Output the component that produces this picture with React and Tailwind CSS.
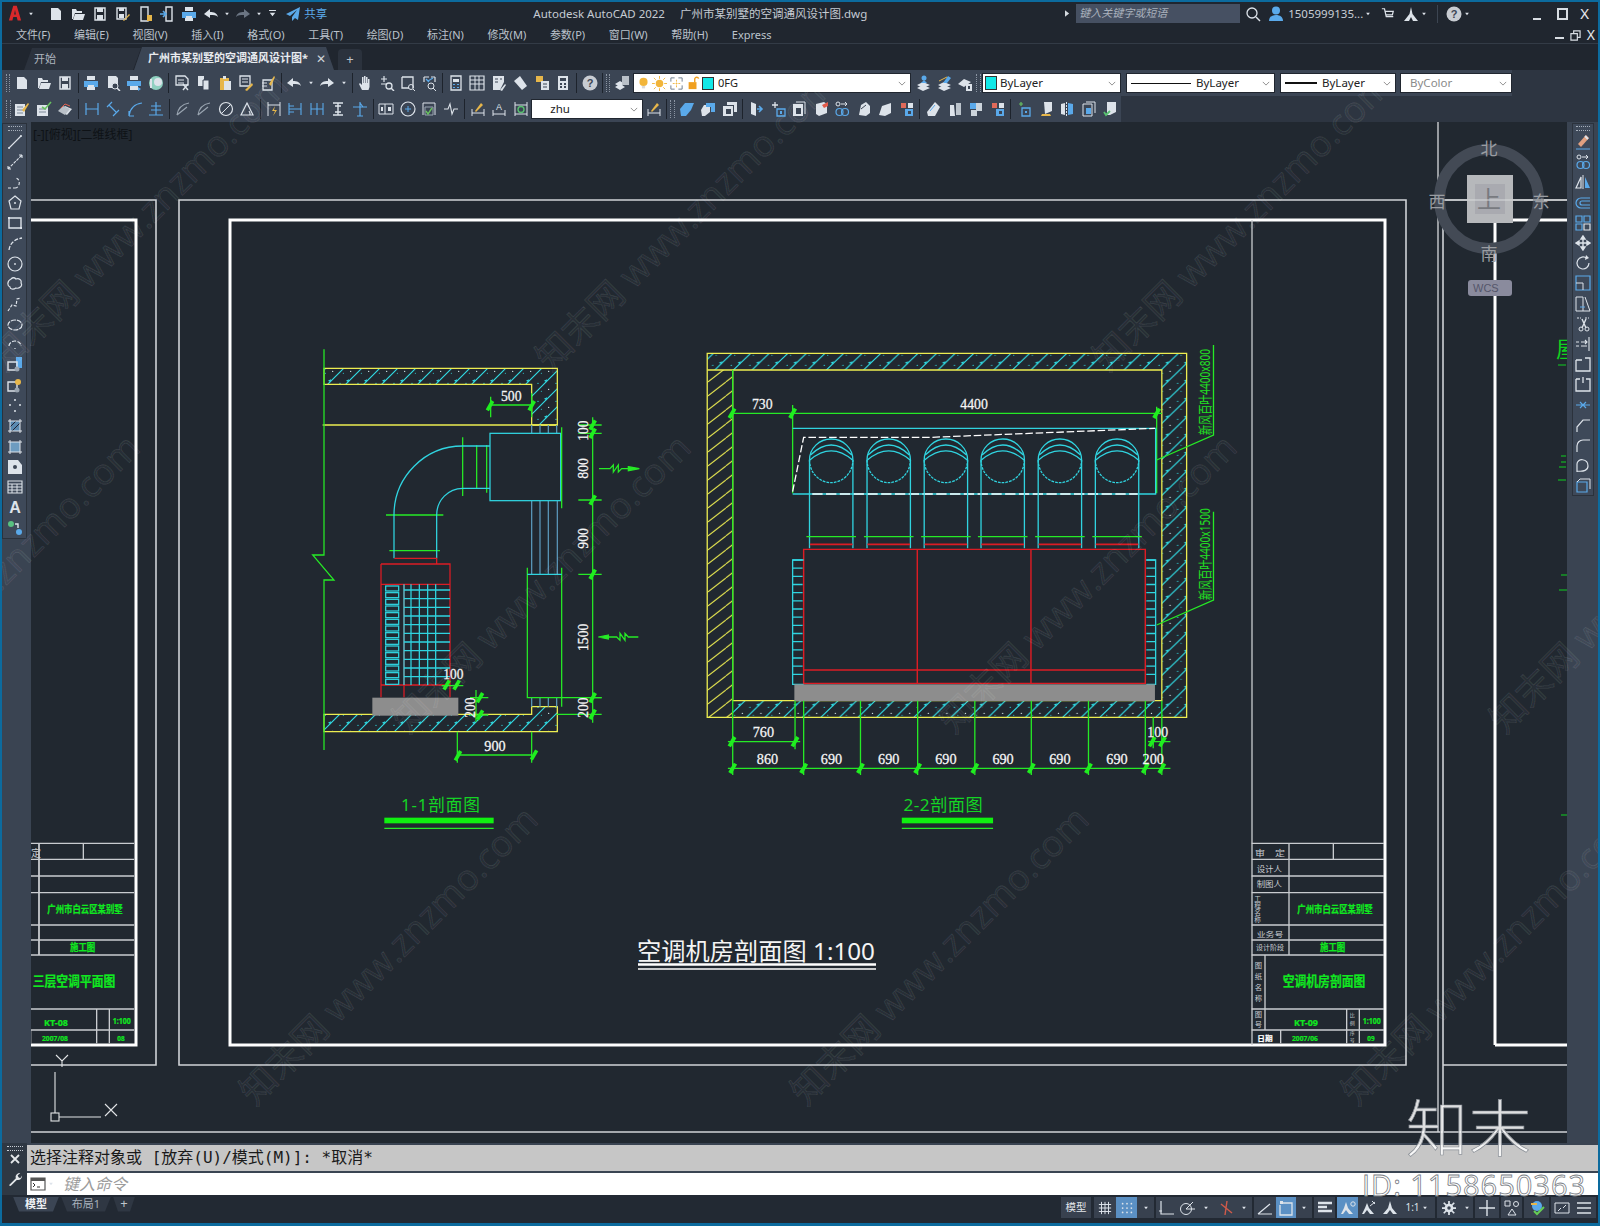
import React from "react";

const W = "#dde3ea", B = "#5aa9ea", Y = "#e6b64a", GY = "#9aa5b1";
const CJK = '"Noto Sans","Noto Sans CJK SC",sans-serif';

const G = {
  doc: <path d="M3 2h7l3 3v9H3z" fill={W} />,
  folder: <><path d="M2 3h4l1 2h5v2H5l-2 6H2z" fill={W} /><path d="M5 8h10l-2 6H3z" fill={W} /></>,
  save: <><path d="M3 2h10v12H3z" fill="none" stroke={W} strokeWidth="1.4" /><path d="M5 2h6v4H5zM5 9h6v5H5z" fill={W} /></>,
  saveas: <><path d="M2 2h9v11H2z" fill="none" stroke={W} strokeWidth="1.4" /><path d="M4 2h5v3H4zM4 8h5v4H4z" fill={W} /><path d="M8 15l6-7 1 1-6 6z" fill={Y} /></>,
  phone: <><path d="M4 1h7v14H4z" fill="none" stroke={W} strokeWidth="1.4" /><path d="M10 9h5v6h-5z" fill={Y} /></>,
  phone2: <><path d="M7 1h6v14H7z" fill="none" stroke={W} strokeWidth="1.4" /><path d="M1 8h5M4 5l3 3-3 3" stroke={B} strokeWidth="1.6" fill="none" /></>,
  print: <><path d="M4 1h8v4H4zM4 10h8v5H4z" fill={W} /><path d="M1 6h14v6H1z" fill={B} /><path d="M5 10h6v5H5z" fill={W} /></>,
  preview: <><path d="M3 1h8l2 2v10H3z" fill={W} /><circle cx="10" cy="11" r="3" fill="#3b4554" stroke={W} /><path d="M12 13l3 3" stroke={W} strokeWidth="1.5" /></>,
  publish: <><path d="M4 1h8v4H4zM4 10h8v5H4z" fill={W} /><path d="M1 6h14v5H1z" fill={B} /><path d="M12 12l3 2-3 2z" fill={B} /></>,
  globe: <><circle cx="8" cy="8" r="7" fill="#8fd0c0" /><circle cx="10" cy="7" r="4" fill={W} /><path d="M3 4v9" stroke={W} strokeWidth="2" /></>,
  undo: <path d="M1 8l6-5v3c4 0 7 1 8 5-2-2-4-2-8-2v3z" fill={W} />,
  redo: <path d="M15 8L9 3v3C5 6 2 7 1 11c2-2 4-2 8-2v3z" fill={W} />,
  redog: <path d="M15 8L9 3v3C5 6 2 7 1 11c2-2 4-2 8-2v3z" fill="#6b7583" />,
  caret: <path d="M5 6h6l-3 4z" fill={W} />,
  dd: <path d="M3 3h10v1.5H3zM4 7h8l-4 5z" fill={W} />,
  share: <path d="M15 1L1 8l4 2 7-6-5 7v4l3-3 3 2z" fill={B} />,
  cut: <><path d="M2 1h9l3 3v6H2z" fill="none" stroke={W} strokeWidth="1.3" /><path d="M4 5h6M4 8h6" stroke={W} /><path d="M9 9l5 6M14 9l-5 6" stroke={W} strokeWidth="1.4" /></>,
  copy: <><path d="M3 1h6v10H3z" fill={W} /><path d="M8 5h6v10H8z" fill={W} stroke="#3b4554" /></>,
  paste: <><path d="M3 3h9v12H3z" fill={Y} /><path d="M6 1h3v3H6z" fill={W} /><path d="M7 6h7v9H7z" fill={W} /></>,
  match: <><path d="M2 1h10v10H2z" fill="none" stroke={W} strokeWidth="1.3" /><path d="M4 4h6M4 7h6" stroke={W} /><path d="M7 15l7-7 1 2-6 6z" fill={Y} /></>,
  matchp: <><path d="M3 5h9v10H3z" fill="none" stroke={W} strokeWidth="1.3" /><path d="M9 9l5-8 1 1-4 9z" fill={Y} /><path d="M2 8h5M2 11h5" stroke={W} /></>,
  hand: <path d="M5 15l-3-6 1-1 2 2V2h1.5v6H7V1h1.5v7H9V2h1.5v6h.5V4h1.5v8l-1 3z" fill={W} />,
  zoomr: <><path d="M5 1v6M2 4h6M2 9h6" stroke={W} strokeWidth="1.2" /><circle cx="10" cy="11" r="3" fill="none" stroke={W} strokeWidth="1.3" /><path d="M12 13l3 3" stroke={W} strokeWidth="1.4" /></>,
  zoomw: <><path d="M2 2h11v11" fill="none" stroke={W} strokeWidth="1.3" /><path d="M2 2v11h7" fill="none" stroke={W} strokeWidth="1.3" /><circle cx="11" cy="12" r="2.5" fill="none" stroke={W} /><path d="M13 14l2 2" stroke={W} /></>,
  zoomp: <><path d="M2 2h5M9 2h4M2 2v5M13 2v5" stroke={W} strokeWidth="1.2" /><path d="M6 6l5-3M4 4l3 3" stroke={B} strokeWidth="1.3" /><circle cx="9" cy="11" r="3" fill="none" stroke={W} /><path d="M11 13l3 3" stroke={W} /></>,
  prop: <><path d="M3 1h10v14H3z" fill="none" stroke={W} strokeWidth="1.3" /><path d="M5 4h6v3H5z" fill={W} /><path d="M5 9h2v1H5zM9 9h2v1H9zM5 12h2v1H5zM9 12h2v1H9z" fill={B} /></>,
  dc: <><path d="M1 1h14v14H1z" fill="none" stroke={W} strokeWidth="1.2" /><path d="M6 1v14M10 1v14M1 5h14M1 9h14" stroke={W} /></>,
  tool: <><path d="M2 1h11v6l-4 8H2z" fill={W} /><path d="M4 4h3M4 7h3M9 4h2" stroke="#3b4554" /><path d="M9 15l5-6 1 1-4 6z" fill={W} /></>,
  sheet: <path d="M2 6l6-5 7 10-5 4z" fill={W} />,
  mark: <><path d="M2 1h7v6H2z" fill={Y} /><path d="M7 6h8v9H7z" fill={W} /><path d="M9 9h4M9 12h4" stroke="#3b4554" /></>,
  calc: <><path d="M3 1h10v14H3z" fill={W} /><path d="M5 3h6v3H5z" fill="#3b4554" /><path d="M5 8h2v2H5zM9 8h2v2H9zM5 11h2v2H5zM9 11h2v2H9z" fill="#3b4554" /></>,
  help: <><circle cx="8" cy="8" r="7.5" fill="#c8ccd2" /><text x="8" y="12" fontSize="11" fontWeight="700" textAnchor="middle" fill="#3b4554" fontFamily="Liberation Sans">?</text></>,
  sq: <path d="M2 2h12v12H2z" fill="none" stroke={W} strokeWidth="1.3" />,
  layer: <><path d="M1 9l5-3 5 3-5 3zM1 12l5-3 5 3-5 3z" fill={W} /><path d="M8 1h7v9H8z" fill="#b9c0c8" /></>,
  layer2: <><path d="M1 10l6-3 7 3-7 3zM1 13l6-3 7 3-7 3z" fill={W} /><circle cx="8" cy="3" r="2.5" fill={B} /><path d="M5 8l3-3 3 3z" fill={B} /></>,
  layer3: <><path d="M1 10l6-3 7 3-7 3zM1 13l6-3 7 3-7 3z" fill={W} /><path d="M11 1l-5 7h4l4-5z" fill={B} /><path d="M2 6l8-4" stroke={Y} /></>,
  layer4: <><path d="M1 9l6-5 7 3-7 5z" fill={W} /><path d="M9 9h6v7H9z" fill={W} /><path d="M11 11h2v3h-2z" fill="#3b4554" /></>,
  bulb: <><circle cx="8" cy="6" r="5" fill="#f2b53a" /><path d="M6 11h4v3H6z" fill="#d9d9d9" /></>,
  sun: <><circle cx="8" cy="8" r="4" fill="#f2b53a" /><path d="M8 0v3M8 13v3M0 8h3M13 8h3M2 2l2 2M12 12l2 2M14 2l-2 2M4 12l-2 2" stroke="#f2b53a" /></>,
  frozen: <><path d="M2 2h4M2 2v4M10 2h4M14 2v4M2 10v4h4M14 10v4h-4" stroke="#6b7a8a" fill="none" /><path d="M8 4v9M4 8h8" stroke="#f0b840" strokeDasharray="2 1" /></>,
  lock: <><path d="M3 7h9v8H3z" fill="#f0a020" /><path d="M10 7V3a2.4 2.4 0 014.5 0" stroke="#f0a020" strokeWidth="1.6" fill="none" /></>,
  note: <><path d="M1 3h10v12H1z" fill={W} /><path d="M3 6h6M3 9h6M3 12h6" stroke="#7a8796" /><path d="M8 9l6-7 1 1-5 8z" fill={Y} /></>,
  noted: <><path d="M1 4h11v11H1z" fill={W} /><path d="M3 8h7M3 11h7" stroke="#7a8796" /><path d="M6 6l3 2 6-7" stroke="#68c060" strokeWidth="1.6" fill="none" /></>,
  noter: <><path d="M3 10l5-5 7 3-5 6z" fill={W} /><path d="M1 10l5-5 7 3-5 6z" fill="#b9c0c8" /><path d="M4 7l4-4 5 2" fill="none" stroke="#e06050" /></>,
  dimh: <path d="M2 2v12M14 2v12M2 8h12" stroke={B} strokeWidth="1.2" fill="none" />,
  dima: <path d="M2 6l5-5M8 15l6-6M4 4l7 7" stroke={B} strokeWidth="1.2" fill="none" />,
  arcd: <path d="M2 15C3 7 7 3 15 2M2 10v5M2 15h5" stroke={B} strokeWidth="1.2" fill="none" />,
  ord: <path d="M1 14h14M8 1v13M3 5h10M3 9h10" stroke={B} strokeWidth="1.2" fill="none" />,
  rad: <path d="M2 14C3 7 8 3 14 2M2 14L12 6" stroke={GY} strokeWidth="1.2" fill="none" />,
  circ: <><circle cx="8" cy="8" r="6.5" fill="none" stroke={W} strokeWidth="1.2" /><path d="M3 13L13 3" stroke={W} /></>,
  ang: <path d="M2 14h12L8 2zM11 14a5 5 0 00-1-4" stroke={W} strokeWidth="1.2" fill="none" />,
  qd: <><path d="M2 1v14M14 1v14M2 4h12" stroke={W} fill="none" /><path d="M9 5l-3 5h3l-2 5 4-6H8z" fill={Y} /></>,
  base: <path d="M2 2v12M14 2v12M2 8h12M2 5h5M2 11h5" stroke={B} strokeWidth="1.1" fill="none" />,
  cont: <path d="M2 2v12M8 2v12M14 2v12M2 8h12" stroke={B} strokeWidth="1.1" fill="none" />,
  sp: <path d="M3 2h10M3 14h10M8 2v12M5 5h6M5 11h6" stroke={W} strokeWidth="1.4" fill="none" />,
  brk: <path d="M8 1v14M1 6h14M5 15h6M8 2l3 4" stroke={B} strokeWidth="1.2" fill="none" />,
  tol: <><path d="M1 3h14v10H1z" fill="none" stroke={W} /><path d="M7 3v10" stroke={W} /><path d="M3 6h2v4H3zM10 6h3v4h-3z" fill={W} /></>,
  center: <><circle cx="8" cy="8" r="7" fill="none" stroke={W} strokeWidth="1.2" /><path d="M8 5v6M5 8h6" stroke={B} /></>,
  insp: <><path d="M2 2h12M2 2v12M14 2v12" stroke={W} fill="none" /><path d="M4 6h8v8H4z" fill="none" stroke={GY} /><path d="M5 10l2 3 4-6" stroke="#68c060" fill="none" strokeWidth="1.4" /></>,
  jog: <path d="M1 8h4l2-5 2 10 2-5h4" stroke={W} strokeWidth="1.1" fill="none" />,
  dimed: <><path d="M2 8v7M14 8v7M2 12h12" stroke={W} fill="none" /><path d="M5 10l6-8 2 2-7 7z" fill={Y} /></>,
  dimt: <><path d="M2 9v6M14 9v6M2 13h12" stroke={W} fill="none" /><text x="8" y="9" fontSize="9" textAnchor="middle" fill={W} fontFamily="Liberation Sans">A</text></>,
  dimu: <><path d="M2 1v14M14 1v14M2 4h12M2 13h12" stroke={W} fill="none" /><circle cx="8" cy="8.5" r="3" fill="none" stroke="#58c070" strokeWidth="1.4" /></>,
  s1: <path d="M1 8l5-6h9l-3 7-5 6H2z" fill={B} />,
  s2: <><path d="M1 9l3-5h6v7l-5 4H2z" fill={W} /><path d="M6 2h9v9h-4V6H6z" fill={B} /></>,
  s3: <><path d="M5 1h10v10h-3V4H5z" fill={W} /><path d="M1 5h10v10H1z" fill={W} /><path d="M4 8h5v5H4z" fill="#3b4554" /></>,
  s4: <><path d="M3 1l5 2v12l-5-2z" fill={W} /><path d="M9 8h4M11 5l3 3-3 3" stroke={B} strokeWidth="1.6" fill="none" /></>,
  s5: <><path d="M5 1v6M2 4h6" stroke={W} strokeWidth="1.3" /><path d="M7 8h8v7H7z" fill="none" stroke={B} strokeWidth="1.3" /><path d="M10 10h2v3h-2z" fill={B} /></>,
  s6: <><path d="M2 3h10v12H2z" fill={W} /><path d="M5 1h9v12" stroke={W} fill="none" /><path d="M5 7h5v6H5z" fill="#3b4554" /></>,
  s7: <><path d="M3 3l8-2 3 2v9l-8 3-3-2z" fill={W} /><path d="M9 4l6-3v4l-4 2z" fill="#e05a4a" /></>,
  s8: <><path d="M2 2a6 6 0 016 6v1H2z" fill="none" stroke={W} /><path d="M8 8h6v6H8z" fill={B} /><path d="M3 3l3 2" stroke={W} /></>,
  s9: <><path d="M2 14l3-9 9-3v10l-6 3z" fill={W} /></>,
  s10: <><path d="M2 2h6v6H2z" fill={B} /><path d="M8 2h6v8H9v5H3V9h5z" fill={W} opacity=".9" /></>,
  s11: <><path d="M2 2h5v5H2z" fill="#e06a5a" /><path d="M9 2h5v5H9z" fill={W} /><path d="M6 8h8v7H6z" fill={B} /><path d="M9 10h3v3H9z" fill="#3b4554" /></>,
  s12: <><path d="M3 14l2-10 5-3 4 4v7l-4 3z" fill={W} /><path d="M5 8l5-4" stroke="#3b4554" /></>,
  s13: <><path d="M2 11l8-10 5 5-5 9H3z" fill={W} /><path d="M5 10l5-6" stroke={B} /></>,
  s14: <><path d="M3 4h4l1 11H3z" fill={W} /><path d="M9 2h5v12H9z" fill={W} opacity=".8" /></>,
  s15: <><path d="M5 1v4M3 3h4" stroke="#68c060" strokeWidth="1.2" /><path d="M6 7h8v8H6z" fill="none" stroke={B} strokeWidth="1.3" /><path d="M9 10h2v2H9z" fill={B} /></>,
  s16: <><path d="M6 1h8v9l-7 3z" fill={W} /><path d="M4 13h8l1 2H3z" fill={Y} /></>,
  s17: <><path d="M2 3l4-1v12l-4-1z" fill={W} /><path d="M9 2l5 1v10l-5 1z" fill={B} /><path d="M7.5 1v14" stroke={W} strokeDasharray="2 1" /></>,
  s18: <><path d="M2 3h9v12H2z" fill="none" stroke={W} /><path d="M5 1h9v11" fill="none" stroke={W} /><path d="M5 7h5v6H5z" fill={B} /></>,
  s19: <><path d="M5 1h9v10l-6 3H5z" fill={W} /><path d="M2 11l2 3 4-4" stroke="#58c070" strokeWidth="1.8" fill="none" /></>,
  line: <><path d="M2 14L14 2" stroke={W} strokeWidth="1.1" /><circle cx="2" cy="14" r="1" fill={W} /><circle cx="14" cy="2" r="1" fill={W} /></>,
  xline: <path d="M1 15L15 1M15 1h-4M15 1v4M1 15h4M1 15v-4" stroke={W} strokeWidth="1.1" fill="none" strokeDasharray="3 1" />,
  pline: <path d="M1 13h7M8 13c5 0 6-9 1-10" stroke={W} strokeWidth="1.1" fill="none" strokeDasharray="3 2" />,
  poly: <><path d="M8 1l6 5-2 8H4L2 6z" fill="none" stroke={W} strokeWidth="1.2" /><circle cx="8" cy="8" r="1" fill={W} /></>,
  rect: <><path d="M2 3h12v10H2z" fill="none" stroke={W} strokeWidth="1.4" /><path d="M1 2h2v2H1zM13 12h2v2h-2z" fill={W} /></>,
  arc: <path d="M2 14C3 7 8 3 15 2" stroke={W} strokeWidth="1.3" fill="none" strokeDasharray="4 1.5" />,
  circle: <><circle cx="8" cy="8" r="7" fill="none" stroke={W} strokeWidth="1.2" /><circle cx="8" cy="8" r=".9" fill={W} /></>,
  cloud: <path d="M4 3c2-2 4-1 5 0 3-1 6 1 5 4 2 3-2 6-5 5-3 2-6 1-6-1C0 10 0 5 4 3z" fill="none" stroke={W} strokeWidth="1.2" />,
  spline: <path d="M1 14l4-6 4 1 1-7 4-1" stroke={W} strokeWidth="1.2" fill="none" strokeDasharray="3 1.5" />,
  ell: <><ellipse cx="8" cy="8" rx="7" ry="5" fill="none" stroke={W} strokeWidth="1.2" strokeDasharray="5 1" /></>,
  ella: <path d="M2 9a6 5 0 1112 0M8 11v1" stroke={W} strokeWidth="1.2" fill="none" strokeDasharray="4 1.5" />,
  blk: <><path d="M9 0h6v11H9z" fill={B} /><path d="M1 5h9v8H1z" fill="none" stroke={W} strokeWidth="1.4" /><circle cx="10" cy="12" r="2.5" fill={GY} /></>,
  blk2: <><path d="M1 4h9v9H1z" fill="none" stroke={W} strokeWidth="1.4" /><circle cx="11" cy="4" r="3" fill={Y} /><circle cx="10" cy="12" r="2.5" fill={GY} /></>,
  pts: <path d="M8 2v.1M3 7v.1M13 7v.1M8 13v.1" stroke={W} strokeWidth="2" strokeLinecap="round" />,
  hatch: <><path d="M3 3h10v10H3z" fill="#5a8ab0" /><path d="M3 9l6-6M5 13l8-8" stroke="#223" /><path d="M3 1v14M13 1v14M1 3h14M1 13h14" stroke={W} /></>,
  grad: <><path d="M3 3h10v10H3z" fill="#6d9cc0" /><path d="M3 1v14M13 1v14M1 3h14M1 13h14" stroke={W} /></>,
  region: <><path d="M1 1h10l4 5v9H1z" fill={W} /><circle cx="8" cy="8" r="2" fill="#3b4554" /></>,
  table: <><path d="M1 2h14v12H1z" fill="none" stroke={W} strokeWidth="1.1" /><path d="M1 5h14M1 8h14M1 11h14M5 5v9M10 5v9" stroke={W} /></>,
  mtext: <text x="8" y="14" fontSize="16" fontWeight="700" textAnchor="middle" fill={W} fontFamily="Liberation Sans">A</text>,
  add: <><circle cx="4" cy="4" r="3" fill="#58c080" /><circle cx="12" cy="12" r="3" fill={B} /><path d="M8 4h3v4" stroke={W} strokeWidth="1.4" fill="none" /></>,
  erase: <><path d="M3 10L11 1l3 3-8 9z" fill="#e0a080" /><path d="M10 2l3 3" stroke={W} strokeWidth="2" /><path d="M1 15h14" stroke={B} /></>,
  cpy: <><circle cx="4" cy="3" r="2" fill="none" stroke={W} /><path d="M7 3h6M11 1l2 2-2 2" stroke={W} fill="none" /><circle cx="5.5" cy="11" r="3.5" fill="none" stroke={B} strokeWidth="1.2" /><circle cx="11" cy="11" r="3.5" fill="none" stroke={B} strokeWidth="1.2" /></>,
  mirror: <><path d="M8 1v14" stroke={W} /><path d="M6 3L1 14h5z" fill="none" stroke={W} strokeWidth="1.2" /><path d="M10 3l5 11h-5z" fill={B} /></>,
  offset: <path d="M15 3H6a5 5 0 000 10h9M15 6H7a2 2 0 000 4h8" stroke={B} strokeWidth="1.2" fill="none" />,
  array: <><path d="M1 1h6v6H1zM9 1h6v6H9zM1 9h6v6H1z" fill="none" stroke={B} strokeWidth="1.2" /><path d="M9 9h6v6H9z" fill="none" stroke={W} strokeWidth="1.2" /></>,
  move: <path d="M8 1v14M1 8h14M8 1L6 4h4zM8 15l-2-3h4zM1 8l3-2v4zM15 8l-3-2v4z" stroke={W} strokeWidth="1.4" fill={W} />,
  rotate: <><path d="M12 3.5A6 6 0 1014 8" stroke={W} strokeWidth="1.2" fill="none" /><path d="M11 0l3 3-4 2z" fill={W} /></>,
  scale: <><path d="M1 1h14v14H1z" fill="none" stroke={B} strokeWidth="1.2" /><path d="M1 8h7v7" stroke={W} fill="none" /></>,
  stretch: <><path d="M1 1h7v14H1z" fill="none" stroke={W} /><path d="M10 1l5 14H8" stroke={W} fill="none" /><path d="M5 11h5" stroke={B} /></>,
  trim: <><path d="M2 2h4M10 2h4" stroke={W} strokeDasharray="2 1" /><path d="M7 3l4 9M11 3l-4 9" stroke={W} strokeWidth="1.4" /><circle cx="6" cy="13" r="2" fill="none" stroke={W} /><circle cx="12" cy="13" r="2" fill="none" stroke={W} /></>,
  extend: <path d="M14 1v14M1 6h3M6 6h6M1 10h3M6 10h6M10 4l2 2-2 2" stroke={W} strokeWidth="1.1" fill="none" />,
  brk1: <path d="M1 4v11h14V2H10M1 4h6" stroke={W} strokeWidth="1.3" fill="none" />,
  brk2: <path d="M1 3v12h14V3H11M5 3H1M8 1v6" stroke={W} strokeWidth="1.3" fill="none" />,
  join: <path d="M1 8h14M5 5l3 3-3 3M11 5L8 8l3 3" stroke={B} strokeWidth="1.2" fill="none" />,
  chamfer: <path d="M2 15v-5l6-7h7" stroke={W} strokeWidth="1.2" fill="none" />,
  fillet: <path d="M2 15V9a6 6 0 016-6h7" stroke={W} strokeWidth="1.2" fill="none" />,
  blend: <path d="M2 15V7c0-6 11-6 11 2 0 4-4 6-11 5" stroke={W} strokeWidth="1.2" fill="none" />,
  explode: <><path d="M2 5h10v10H2z" fill="none" stroke={B} strokeWidth="1.2" /><path d="M5 2h10v10" fill="none" stroke={W} /><path d="M2 5l3-3" stroke={W} /></>,
  grid: <path d="M4 1v14M8 1v14M12 1v14M1 4h14M1 8h14M1 12h14" stroke={W} strokeWidth="1.1" />,
  snap: <path d="M3 3v.1M8 3v.1M13 3v.1M3 8v.1M8 8v.1M13 8v.1M3 13v.1M8 13v.1M13 13v.1" stroke={W} strokeWidth="2" strokeLinecap="round" />,
  ortho: <path d="M3 1v13h13M1 11h3" stroke={W} strokeWidth="1.2" fill="none" />,
  polar: <><circle cx="7" cy="9" r="5.5" fill="none" stroke={W} /><path d="M7 9h9M7 9l7-7" stroke={W} /></>,
  osnap: <path d="M9 1l-2 14M3 4l11 9" stroke="#d05a4a" strokeWidth="1.4" fill="none" />,
  angle: <path d="M1 14h14M1 14L13 4" stroke={W} strokeWidth="1.2" fill="none" />,
  lwb: <><path d="M2 1h3v3H2z" fill={W} /><path d="M4 3h10v12H2V5" stroke={W} strokeWidth="1.3" fill="none" /></>,
  lw: <path d="M1 3h14M1 7h9M1 11h14" stroke={W} strokeWidth="2.4" />,
  annot: <><path d="M6 2l2 6 5 6H9L6 10l-3 4H1l3-6z" fill={W} /><circle cx="13" cy="4" r="2.2" fill="none" stroke={W} /></>,
  annot2: <><path d="M6 3l2 5 5 6H9L6 10l-3 4H1l3-6z" fill={W} /><path d="M9 6l5-4M11 1l3 3" stroke={W} /></>,
  annot3: <path d="M8 1l2 7 5 6h-4L8 10l-3 4H1l5-6z" fill={W} />,
  gear: <><circle cx="8" cy="8" r="5" fill={W} /><circle cx="8" cy="8" r="2" fill="#38414f" /><path d="M8 0v16M0 8h16M2 2l12 12M14 2L2 14" stroke={W} strokeWidth="2" /><circle cx="8" cy="8" r="2" fill="#38414f" /></>,
  plus: <path d="M8 0v16M0 8h16" stroke={W} strokeWidth="1.4" />,
  iso: <><path d="M1 1h5v5H1z" fill="none" stroke={W} /><circle cx="12" cy="4" r="2.5" fill="none" stroke={W} /><path d="M8 9l4 6H4z" fill="none" stroke={W} /></>,
  clean: <><circle cx="8" cy="6" r="5" fill={B} /><path d="M2 4h6" stroke={Y} strokeWidth="2" /><path d="M5 11l3 3 7-7" stroke="#66cc55" strokeWidth="2" fill="none" /></>,
  full: <><path d="M1 3h14v10H1z" fill="none" stroke={W} /><path d="M4 11l3-3M12 5l-3 3" stroke={W} /></>,
  burger: <path d="M1 3h14M1 8h14M1 13h14" stroke={W} strokeWidth="1.6" />,
  search: <><circle cx="7" cy="7" r="5" fill="none" stroke={W} strokeWidth="1.3" /><path d="M11 11l4 4" stroke={W} strokeWidth="1.5" /></>,
  user: <><circle cx="8" cy="4.5" r="4" fill={B} /><path d="M1 15c0-4 3-6 7-6s7 2 7 6z" fill={B} /></>,
  cart: <path d="M1 2h3l2 9h8M5 5h9l-1 4H6M6 13v.1M12 13v.1" stroke={W} strokeWidth="1.4" fill="none" />,
  adesk: <path d="M8 1l1.5 7 5.5 7h-5L8 11l-2 4H1l5.5-7z" fill={W} />,
  termi: <><path d="M1 2h14v12H1z" fill="none" stroke="#555" strokeWidth="1.2" /><path d="M1 2h14v3H1z" fill="#555" /><path d="M3 7l2 2-2 2M7 11h3" stroke="#333" fill="none" /></>,
};

function Ic({ n, cls = "w-4 h-4" }) {
  return <svg viewBox="0 0 16 16" className={cls}>{G[n]}</svg>;
}

function Row({ items }) {
  return items.map((n, i) => {
    if (n === "|") return <div key={i} className="w-[6px] h-full flex items-center justify-center"><div className="w-px h-[20px] bg-[#1d232c]" /></div>;
    if (n === "h") return <div key={i} className="w-[5px] h-[18px] mx-[1px] border-x border-dotted border-[#8b95a3]" />;
    if (n === "v") return <div key={i} className="w-[15px] flex justify-center"><Ic n="caret" cls="w-[10px] h-[10px]" /></div>;
    return <div key={i} className="w-[21.5px] flex items-center justify-center shrink-0"><Ic n={n} /></div>;
  });
}

function Combo({ cls, children, muted }) {
  return (
    <div className={`${cls} h-[20px] bg-white flex items-center relative shrink-0 border border-[#20262f] ${muted ? "text-[#8a8a8a]" : "text-[#222]"}`}>
      {children}
      <svg viewBox="0 0 10 6" className="absolute right-[4px] top-[7px] w-[8px] h-[5px]"><path d="M1 1l4 4 4-4" fill="none" stroke="#777" /></svg>
    </div>
  );
}

const Y1 = "#eded50", GR = "#26ea26", CY = "#30d4e0", RD = "#dc1c24", WT = "#f6f6f6";

function Tick({ x, y }) {
  return <path d={`M${x - 8} ${y + 14}L${x + 8} ${y - 14}`} stroke="#1fee1f" strokeWidth="11" />;
}
function Num({ x, y, w, t, r, size = 46, fill = WT }) {
  return (
    <text x={x} y={y} fontSize={size} fill={fill} stroke={fill} strokeWidth=".8" textAnchor="middle" textLength={w} lengthAdjust="spacingAndGlyphs" fontFamily="Liberation Serif" transform={r ? `rotate(-90 ${x} ${y})` : undefined}>{t}</text>
  );
}

function Section1() {
  const slats = [];
  for (let y = 738; y < 1030; y += 20) slats.push(<rect key={y} x="257" y={y} width="39" height="15" />);
  const gh = [];
  for (let y = 750; y < 1035; y += 26) gh.push(<path key={y} d={`M312 ${y}H450`} />);
  return (
    <g transform="translate(300 340) scale(.33333)" fill="none" strokeWidth="3.8">
      <path d="M72 85H772V255H695V133H72Z" fill="url(#hc)" stroke={Y1} />
      <path d="M68 255H772" stroke={Y1} />
      <path d="M72 1123H695V1100H772V1175H72Z" fill="url(#hc)" stroke={Y1} />
      <path d="M72 28V645H38L102 720H72V1230" stroke={GR} />
      <path d="M570 195H695M572 170V232M695 160V232" stroke={GR} />
      <Tick x={570} y={197} /><Tick x={695} y={197} />
      <Num x={634} y={184} w={62} t="500" />
      <path d="M695 255V280M720 255V280M745 255V280M770 255V280M695 482V703M720 482V703M745 482V703M772 482V703M695 1073V1100M720 1073V1100M745 1073V1100M770 1073V1100" stroke="#5b97ba" />
      <rect x="570" y="280" width="212" height="202" stroke={CY} />
      <path d="M785 262V505M682 683V1073H905M785 683V1100M770 1123H905M488 292V468M530 316V445M560 315V458M258 525H430M268 632H420" stroke={GR} />
      <path d="M682 703H785M488 318H570M488 445H570M488 318A206 207 0 0 0 282 525V655M488 445A78 80 0 0 0 410 525V655" stroke={CY} />
      <path d="M283 655H410V672M243 672H450V1072M243 672V1072M243 733H450M243 1035H450M312 733V1072" stroke={RD} />
      <g stroke={CY}>{slats}{gh}<path d="M333 733V1035M358 733V1035M383 733V1035M407 733V1035M312 733V1035" /></g>
      <rect x="217" y="1073" width="258" height="54" fill="#8d8d8d" />
      <path d="M425 1037H490M528 1050V1145M510 1073H565M510 1125H565M472 1175V1268M695 1175V1268M472 1245H695" stroke={GR} />
      <Tick x={440} y={1035} /><Tick x={470} y={1035} /><Tick x={540} y={1073} /><Tick x={540} y={1125} /><Tick x={474} y={1247} /><Tick x={702} y={1245} />
      <Num x={460} y={1018} w={60} t="100" />
      <Num x={524} y={1103} w={60} t="200" r />
      <Num x={585} y={1232} w={64} t="900" />
      <path d="M878 232V1148M835 255H905M835 280H905M835 480H905M835 703H905M835 1073H905" stroke={GR} />
      {[255, 280, 480, 703, 1073, 1123].map((y) => <Tick key={y} x={878} y={y} />)}
      <Num x={864} y={272} w={60} t="100" r />
      <Num x={864} y={385} w={62} t="800" r />
      <Num x={864} y={595} w={62} t="900" r />
      <Num x={864} y={892} w={82} t="1500" r />
      <Num x={864} y={1103} w={60} t="200" r />
      <path d="M897 386H930L940 375V396L955 375V396L965 386H985" stroke={GR} />
      <path d="M985 380L1018 386L985 392Z" fill={GR} stroke={GR} />
      <path d="M1015 891H985L975 880V901L960 880V901L950 891H925" stroke={GR} />
      <path d="M925 885L895 891L925 897Z" fill={GR} stroke={GR} />
      <text x="303" y="1413" fontSize="50" fill="#14d424" textLength="237" fontFamily={CJK}>1-1剖面图</text>
      <rect x="253" y="1433" width="328" height="17" fill="#10f010" />
      <path d="M253 1465H581" stroke={GR} />
    </g>
  );
}

function Section2() {
  const fans = [410, 577, 743, 908, 1074, 1240];
  const rungs = [];
  for (let y = 660; y <= 1012; y += 24.5) rungs.push(y);
  const xs = [124, 330, 495, 661, 827, 991, 1157, 1322, 1370];
  return (
    <g transform="translate(690 340) scale(.3444 .33333)" fill="none" strokeWidth="3.8">
      <path d="M50 40H1442V1132H50ZM124 90V1082H1370V90Z" fill="url(#hc)" fillRule="evenodd" />
      <rect x="50" y="90" width="74" height="1042" fill="#212830" />
      <rect x="50" y="90" width="74" height="1042" fill="url(#hy)" />
      <path d="M50 40H1442V1132H50Z" stroke={Y1} />
      <path d="M124 90H1370V1082H124ZM50 90H124" stroke={Y1} />
      <path d="M124 220H1370M124 90V1082M298 195V460M1355 200V460" stroke={GR} />
      <Tick x={122} y={220} /><Tick x={298} y={220} /><Tick x={1355} y={220} />
      <Num x={210} y={208} w={60} t="730" />
      <Num x={825} y={208} w={80} t="4400" />
      <path d="M298 265H1352V462H298" stroke={CY} />
      <path d="M298 455L330 292H700L1350 265" stroke="#fff" strokeDasharray="22 8" />
      <path d="M355 462H1300" stroke="#fff" strokeDasharray="30 10" />
      {fans.map((c) => (
        <g key={c}>
          <path d={`M${c - 63} 625V360A63 63 0 0 1 ${c + 63} 360V625`} stroke={CY} />
          <path d={`M${c - 60} 345Q${c} 285 ${c + 60} 345M${c - 62} 360Q${c} 305 ${c + 62} 360`} stroke={CY} />
          <path d={`M${c - 63} 360A63 68 0 0 0 ${c + 63} 360`} stroke={CY} strokeDasharray="8 3" />
          <path d={`M${c - 72} 590H${c + 72}`} stroke={GR} />
          <path d={`M${c - 62} 613H${c + 62}`} stroke={RD} strokeWidth="5" />
        </g>
      ))}
      <path d="M330 628H1322V1030H330ZM660 628V1030M990 628V1030M330 990H1322" stroke={RD} strokeWidth="4.2" />
      <path d="M330 660H298V1033H330M1325 660H1352V1033H1325" stroke={CY} />
      {rungs.map((y) => <path key={y} d={`M298 ${y}H327M1325 ${y}H1352`} stroke={CY} />)}
      <rect x="303" y="1033" width="1047" height="50" fill="#8d8d8d" />
      {xs.map((x) => <path key={x} d={`M${x} 1082V1305`} stroke={GR} />)}
      <path d="M110 1285H1395M110 1205H320M305 1082V1228M1330 1205H1395M1345 1132V1225" stroke={GR} />
      {xs.map((x) => <Tick key={x} x={x} y={1285} />)}
      <Tick x={122} y={1205} /><Tick x={305} y={1205} /><Tick x={1342} y={1205} /><Tick x={1372} y={1205} />
      <Num x={213} y={1192} w={62} t="760" />
      <Num x={225} y={1272} w={62} t="860" />
      {[411, 577, 743, 909, 1074, 1240].map((x) => <Num key={x} x={x} y={1272} w={62} t="690" />)}
      <Num x={1345} y={1272} w={62} t="200" />
      <Num x={1358} y={1192} w={60} t="100" />
      <path d="M1355 360L1520 285V15M1355 855L1520 780V515" stroke={GR} />
      <text transform="translate(1510 285) rotate(-90)" fontSize="40" fill="#22e022" textLength="258" lengthAdjust="spacingAndGlyphs" fontFamily={CJK}>新风百叶4400x800</text>
      <text transform="translate(1510 780) rotate(-90)" fontSize="40" fill="#22e022" textLength="275" lengthAdjust="spacingAndGlyphs" fontFamily={CJK}>新风百叶4400x1500</text>
      <text x="620" y="1413" fontSize="50" fill="#14d424" textLength="230" fontFamily={CJK}>2-2剖面图</text>
      <rect x="615" y="1433" width="265" height="17" fill="#10f010" />
      <path d="M615 1465H880" stroke={GR} />
    </g>
  );
}

function Tx({ x, y, s = 24, t, fill = "#c8ccd0", w, bold }) {
  return <text x={x} y={y} fontSize={s} fill={fill} textAnchor="middle" fontFamily={CJK} fontWeight={bold ? 700 : 400} stroke={bold ? fill : "none"} strokeWidth={bold ? .6 : 0} textLength={w} lengthAdjust={w ? "spacingAndGlyphs" : undefined}>{t}</text>;
}

function TitleBlock({ ox, left, name, no, date, seq }) {
  const L = "#c9ccd0";
  return (
    <g transform={`translate(${ox} 830) scale(.33333)`} fill="none" stroke={L} strokeWidth="4">
      <path d="M35 40H432M35 88H432M35 138H432M35 188H432M35 285H432M35 330H432M35 375H432M35 537H432M35 600H432M147 40V375M280 40V88M75 375V600M122 600V640M320 537V640M358 537V640" />
      {left && <g stroke="none">
        <Tx x={90} y={78} t="审　定" w={90} />
        <Tx x={88} y={125} t="设计人" w={76} />
        <Tx x={88} y={172} t="制图人" w={76} />
        {["工", "程", "名", "称"].map((c, i) => <Tx key={c} x={53} y={213 + i * 21} s={20} t={c} />)}
        <Tx x={90} y={322} t="业务号" s={20} w={80} />
        <Tx x={90} y={361} t="设计阶段" s={20} w={84} />
        {["图", "纸", "名", "称"].map((c, i) => <Tx key={c} x={55} y={413 + i * 33} s={22} t={c} />)}
        <Tx x={55} y={562} t="图" s={22} /><Tx x={55} y={592} t="号" s={22} />
        <Tx x={75} y={632} t="日期" s={22} w={46} fill="#fff" bold />
        <Tx x={337} y={560} t="比" s={15} /><Tx x={337} y={585} t="例" s={15} />
        <Tx x={337} y={615} t="序" s={15} /><Tx x={337} y={635} t="号" s={15} />
      </g>}
      <g stroke="none">
        <Tx x={285} y={249} s={30} w={226} t="广州市白云区某别墅" fill="#10e820" bold />
        <Tx x={278} y={362} s={30} w={76} t="施工图" fill="#10e820" bold />
        <Tx x={252} y={467} s={40} w={248} t={name} fill="#10e820" bold />
        <Tx x={198} y={587} s={28} w={72} t={no} fill="#10e820" bold />
        <Tx x={195} y={633} s={22} w={78} t={date} fill="#10e820" bold />
        <Tx x={395} y={581} s={24} w={54} t="1:100" fill="#10e820" bold />
        <Tx x={393} y={632} s={22} w={22} t={seq} fill="#10e820" bold />
      </g>
    </g>
  );
}

const ICONS_L = ["line", "xline", "pline", "poly", "rect", "arc", "circle", "cloud", "spline", "ell", "ella", "blk", "blk2", "pts", "hatch", "grad", "region", "table", "mtext", "add"];
const ICONS_R = ["erase", "cpy", "mirror", "offset", "array", "move", "rotate", "scale", "stretch", "trim", "extend", "brk1", "brk2", "join", "chamfer", "fillet", "blend", "explode"];

const marks = [[5, 373], [551, 373], [1108, 373], [-143, 735], [408, 735], [954, 735], [1505, 735], [255, 1107], [806, 1107], [1357, 1107]];

export default function App() {
  return (
    <div className="relative w-[1600px] h-[1226px] overflow-hidden flex flex-col bg-[#20262f] border-t-2 border-x-2 border-b-[3px] border-[#0c6b9e] text-[#c8ced6]" style={{ fontFamily: CJK }}>
      {/* title bar */}
      <div className="h-[23px] shrink-0 flex items-center pl-[6px] relative">
        <svg viewBox="0 0 16 18" className="w-[14px] h-[17px] shrink-0"><path d="M6 0h4l5 17h-4l-1-4H6l-1 4H1zM7 10h2L8 5z" fill="#d8282a" /></svg>
        <div className="ml-[4px] mr-[9px]"><Ic n="caret" cls="w-[10px] h-[10px]" /></div>
        {["doc", "folder", "save", "saveas", "phone", "phone2", "print"].map((n) => <div key={n} className="w-[22.2px] flex justify-center shrink-0"><Ic n={n} /></div>)}
        <div className="w-[22px] flex justify-center"><Ic n="undo" /></div>
        <Ic n="caret" cls="w-[10px] h-[10px]" />
        <div className="w-[22px] flex justify-center"><Ic n="redog" /></div>
        <Ic n="caret" cls="w-[10px] h-[10px]" />
        <div className="ml-[3px]"><Ic n="dd" cls="w-[11px] h-[11px]" /></div>
        <div className="ml-[7px]"><Ic n="share" /></div>
        <span className="ml-[3px] text-[11.5px] text-[#5aa9ea] whitespace-nowrap">共享</span>
        <span className="ml-[206px] text-[11.5px] text-[#c5cbd3] whitespace-pre">Autodesk AutoCAD 2022</span>
        <span className="ml-[15px] text-[11.5px] text-[#c5cbd3] whitespace-pre">广州市某别墅的空调通风设计图.dwg</span>
        <svg viewBox="0 0 6 8" className="ml-[198px] w-[5px] h-[7px]"><path d="M0 0l5 4-5 4z" fill="#d5dae0" /></svg>
        <div className="ml-[6px] w-[164px] h-[19px] bg-[#465062] flex items-center pl-[3px] text-[11px] italic text-[#a9b1bc]">键入关键字或短语</div>
        <div className="ml-[5px]"><Ic n="search" /></div>
        <div className="ml-[7px]"><Ic n="user" /></div>
        <span className="ml-[4px] text-[11.5px] text-[#c8ced6] whitespace-nowrap">1505999135...</span>
        <Ic n="caret" cls="w-[10px] h-[10px]" />
        <div className="ml-[8px]"><Ic n="cart" cls="w-[14px] h-[14px]" /></div>
        <div className="ml-[8px]"><Ic n="adesk" /></div>
        <Ic n="caret" cls="w-[10px] h-[10px]" />
        <div className="mx-[8px] w-px h-[18px] bg-[#3c4552]" />
        <Ic n="help" />
        <Ic n="caret" cls="w-[10px] h-[10px]" />
        <div className="ml-[61px] w-[8px] h-[9px] border-b-2 border-[#d8dde3] self-start mt-[9px]" />
        <div className="ml-[16px] w-[11px] h-[12px] border-2 border-[#d8dde3]" />
        <span className="ml-[12px] text-[15px] leading-none text-[#e6e9ed]">X</span>
      </div>
      {/* menu */}
      <div className="h-[19px] shrink-0 flex items-center pt-[2px] pl-[14px] gap-[23.7px] text-[11px] text-[#bcc3cc] relative border-b border-[#333b46]">
        {["文件(F)", "编辑(E)", "视图(V)", "插入(I)", "格式(O)", "工具(T)", "绘图(D)", "标注(N)", "修改(M)", "参数(P)", "窗口(W)", "帮助(H)", "Express"].map((m) => <span key={m} className="whitespace-nowrap">{m}</span>)}
        <div className="ml-auto flex items-center pr-[3px] gap-[6px]">
          <div className="w-[9px] h-[8px] border-b-2 border-[#d8dde3]" />
          <svg viewBox="0 0 12 12" className="w-[11px] h-[11px]"><path d="M1 4h7v7H1zM4 4V1h7v7H8" fill="none" stroke="#d8dde3" strokeWidth="1.3" /></svg>
          <span className="text-[14px] leading-none text-[#e6e9ed]">X</span>
        </div>
      </div>
      {/* tabs */}
      <div className="h-[26px] shrink-0 flex items-end pl-[22px] text-[11px]">
        <div className="w-[117px] h-[22px] bg-[#2b323d] pl-[10px] flex items-center text-[#aeb5bf] [clip-path:polygon(8px_0,100%_0,calc(100%-8px)_100%,0_100%)]">开始</div>
        <div className="-ml-[7px] w-[200px] h-[23px] bg-[#3b4554] pl-[14px] flex items-center gap-[8px] text-[#e8ebef] font-bold [clip-path:polygon(8px_0,calc(100%-8px)_0,100%_100%,0_100%)]">
          <span className="whitespace-nowrap">广州市某别墅的空调通风设计图*</span>
          <span className="text-[12px] font-normal text-[#cfd4da] leading-none">✕</span>
        </div>
        <div className="ml-[4px] w-[24px] h-[21px] bg-[#2b323d] flex items-center justify-center text-[13px] text-[#bfc5cd] rounded-t-[4px]">+</div>
      </div>
      {/* toolbar row 1 */}
      <div className="h-[26px] shrink-0 flex items-center bg-[#2d3541]">
        <div className="w-[1510px] h-full bg-[#3b4554] flex items-center pl-[3px]">
          <Row items={["h", "doc", "folder", "save", "|", "print", "preview", "publish", "globe", "|", "cut", "copy", "paste", "match", "matchp", "|", "undo", "v", "redo", "v", "|", "hand", "zoomr", "zoomw", "zoomp", "|", "prop", "dc", "tool", "sheet", "mark", "calc", "|", "help", "|", "h", "layer"]} />
          <Combo cls="w-[278px] text-[11px] pl-[3px] gap-[2px]">
            <Ic n="bulb" cls="w-[13px] h-[13px]" /><Ic n="sun" cls="w-[15px] h-[15px]" /><Ic n="frozen" cls="w-[15px] h-[15px]" /><Ic n="lock" cls="w-[14px] h-[14px]" />
            <div className="w-[12px] h-[13px] bg-[#12e8e8] border border-[#333]" />
            <span className="ml-[2px]">0FG</span>
          </Combo>
          <div className="w-[22px] ml-[2px] flex justify-center shrink-0"><Ic n="layer2" /></div>
          <div className="w-[20px] flex justify-center shrink-0"><Ic n="layer3" /></div>
          <div className="w-[20px] flex justify-center shrink-0"><Ic n="layer4" /></div>
          <div className="w-[6px] h-[18px] mx-[1px] border-x border-dotted border-[#8b95a3]" />
          <Combo cls="w-[139px] text-[11.5px] pl-[2px] gap-[3px]">
            <div className="w-[12px] h-[14px] bg-[#12e8e8] border border-[#333]" /><span>ByLayer</span>
          </Combo>
          <Combo cls="ml-[5px] w-[149px] text-[11.5px] pl-[4px]">
            <div className="w-[60px] h-px bg-[#111]" /><span className="ml-[5px]">ByLayer</span>
          </Combo>
          <Combo cls="ml-[5px] w-[116px] text-[11.5px] pl-[4px]">
            <div className="w-[32px] h-[2px] bg-[#111]" /><span className="ml-[5px]">ByLayer</span>
          </Combo>
          <Combo cls="ml-[4px] w-[112px] text-[11.5px] pl-[9px]" muted><span>ByColor</span></Combo>
        </div>
      </div>
      {/* toolbar row 2 */}
      <div className="h-[26px] shrink-0 flex items-center bg-[#2d3541]">
        <div className="w-[1119px] h-full bg-[#3b4554] flex items-center pl-[3px]">
          <Row items={["h", "note", "noted", "noter", "|", "dimh", "dima", "arcd", "ord", "|", "rad", "rad", "circ", "ang", "|", "qd", "base", "cont", "sp", "brk", "|", "tol", "center", "insp", "jog", "|", "dimed", "dimt", "dimu", "|"]} />
          <Combo cls="-ml-[5px] w-[112px] text-[11.5px] pl-[18px]"><span>zhu</span></Combo>
          <div className="w-[21px] flex justify-center shrink-0"><Ic n="dimed" /></div>
          <Row items={["|", "h", "s1", "s2", "s3", "|", "s4", "s5", "s6", "s7", "cpy", "s12", "s9", "s11", "|", "s13", "s14", "s10", "s11", "|", "s15", "s16", "s17", "s18", "s19"]} />
        </div>
      </div>
      {/* canvas */}
      <div className="h-[1021px] shrink-0 flex">
        <div className="w-[29px] shrink-0 bg-[#3a4452] pt-px">
          <div className="w-[25px] bg-[#3e4959] border border-[#2b323c] flex flex-col items-center">
            <div className="w-[14px] h-[5px] mt-[2px] border-y border-dotted border-[#a7b0bb]" />
            <div className="h-[1px]" />
            {ICONS_L.map((n) => <div key={n} className="h-[20.3px] flex items-center"><Ic n={n} /></div>)}
          </div>
        </div>
        <div className="flex-1 min-w-0 bg-[#212830]">
          <svg viewBox="31 122 1536 1021" className="block w-[1536px] h-[1021px]">
            <defs>
              <pattern id="hc" patternUnits="userSpaceOnUse" width="54" height="54">
                <path d="M0 54L54 0M-14 14L14 -14M40 68L68 40" stroke="#30dce4" strokeWidth="3.4" />
                <path d="M30 14l9 -4l-1 9z" fill="#30dce4" />
                <circle cx="12" cy="22" r="2" fill="#30dce4" /><circle cx="44" cy="40" r="2" fill="#e8ffff" /><circle cx="22" cy="46" r="1.6" fill="#30dce4" />
              </pattern>
              <pattern id="hy" patternUnits="userSpaceOnUse" width="52" height="42">
                <path d="M0 42L52 0M-26 21L0 0M52 42L78 21" stroke={Y1} strokeWidth="3" />
              </pattern>
            </defs>
            {/* left sheet */}
            <path d="M20 200H156V1065H20" fill="none" stroke="#cfd2d6" strokeWidth="1.6" />
            <path d="M20 220H136V1045H20" fill="none" stroke="#fff" strokeWidth="3" />
            <path d="M39 843V955" stroke="#c9ccd0" strokeWidth="1.3" />
            <TitleBlock ox={-10} name="三层空调平面图" no="KT-08" date="2007/08" seq="08" />
            <text x="31" y="857" fontSize="10" fill="#c8ccd0" fontFamily={CJK}>定</text>
            {/* middle sheet */}
            <path d="M179 200H1406V1065H179Z" fill="none" stroke="#cfd2d6" strokeWidth="1.6" />
            <path d="M230 220H1385V1045H230Z" fill="none" stroke="#fff" strokeWidth="3" />
            <path d="M1252 220V1045" stroke="#c9ccd0" strokeWidth="1.3" />
            <TitleBlock ox={1240} left name="空调机房剖面图" no="KT-09" date="2007/06" seq="09" />
            <Section1 />
            <Section2 />
            <text x="637" y="960" fontSize="24" fill="#f4f4f4" textLength="238" lengthAdjust="spacingAndGlyphs" fontFamily={CJK}>空调机房剖面图 1:100</text>
            <path d="M638 964.5H876" stroke="#fff" strokeWidth="2.4" /><path d="M638 969H876" stroke="#fff" strokeWidth="1.4" />
            {/* right sheet */}
            <path d="M1438 122V1132" stroke="#e8eaec" strokeWidth="1.2" />
            <path d="M1443 1132V200H1570" fill="none" stroke="#cfd2d6" strokeWidth="1.6" />
            <path d="M1495 1045V220H1570M1495 1045H1570" fill="none" stroke="#fff" strokeWidth="3" />
            <path d="M1443 1065H1570M31 1132H1567" stroke="#cfd2d6" strokeWidth="1.4" />
            <text x="1556" y="357" fontSize="22" fill="#10d020" fontFamily={CJK}>屋</text>
            <path d="M1558 365H1566M1561 456H1566M1561 462H1566M1559 467H1566M1558 480H1566M1561 575H1567M1559 590H1567M1561 815H1567" stroke="#10d020" strokeWidth="1.2" />
            {/* view cube */}
            <circle cx="1489" cy="199" r="49.5" fill="none" stroke="#434a55" strokeWidth="11" />
            <rect x="1467" y="175" width="46" height="48" fill="#b6b8bb" />
            <rect x="1475" y="184" width="30" height="30" fill="#a9aab0" />
            <text x="1489" y="208" fontSize="24" fill="#787a80" textAnchor="middle" fontFamily={CJK}>上</text>
            <path d="M1443 200H1567" stroke="#d7d9dc" strokeWidth="1.2" />
            {[["北", 1489, 155], ["西", 1437, 208], ["东", 1541, 208], ["南", 1489, 260]].map(([t, x, y]) => <text key={t} x={x} y={y} fontSize="17" fill="#9a9da2" textAnchor="middle" fontFamily={CJK}>{t}</text>)}
            <rect x="1468" y="280" width="44" height="16" rx="3" fill="#8a8b9d" />
            <text x="1473" y="292" fontSize="11" fill="#55566a" fontFamily="Liberation Sans">WCS</text>
            {/* view label */}
            <text x="33" y="139" fontSize="12" fill="#0e1216" fontFamily={CJK}>[-][俯视][二维线框]</text>
            {/* UCS */}
            <g fill="none" stroke="#e2e4e6" strokeWidth="1.1">
              <path d="M55 1072V1113M59 1117H101M105 1104L117 1116M117 1104L105 1116M56 1055L62 1061L68 1055M62 1061V1067" />
              <rect x="51" y="1113" width="8" height="8" />
            </g>
          </svg>
        </div>
        <div className="w-[31px] shrink-0 bg-[#3a4452] pt-px pl-[5px]">
          <div className="w-[22px] bg-[#3e4959] border border-[#2b323c] flex flex-col items-center">
            <div className="w-[14px] h-[5px] mt-[2px] border-y border-dotted border-[#a7b0bb]" />
            <div className="h-[1px]" />
            {ICONS_R.map((n) => <div key={n} className="h-[20.2px] flex items-center"><Ic n={n} /></div>)}
          </div>
        </div>
      </div>
      {/* command line */}
      <div className="h-[52px] shrink-0 flex bg-[#3a4452]">
        <div className="w-[25px] shrink-0 bg-[#2f3843] flex flex-col items-center pt-[3px] gap-[3px]">
          <div className="w-[16px] h-[5px] border-y border-dotted border-[#c8ced6]" />
          <svg viewBox="0 0 10 10" className="w-[10px] h-[10px]"><path d="M1 1l8 8M9 1l-8 8" stroke="#e4e7ea" strokeWidth="1.8" /></svg>
          <svg viewBox="0 0 16 16" className="w-[14px] h-[14px] mt-[5px]"><path d="M1 15l8-8c-1-3 1-6 5-6l-3 3 1 2 2 1 2-3c0 4-3 6-6 5l-7 7z" fill="#e4e7ea" /></svg>
        </div>
        <div className="flex-1 min-w-0 flex flex-col pt-[2px]">
          <div className="h-[26px] bg-[#c6c6c6] pl-[3px] flex items-center text-[16px] text-[#1a1a1a] whitespace-pre" style={{ fontFamily: '"DejaVu Sans Mono","Noto Sans CJK SC",monospace' }}>选择注释对象或 [放弃(U)/模式(M)]: *取消*</div>
          <div className="h-[22px] mt-[2px] bg-white flex items-center pl-[3px] text-[16px] italic text-[#9c9c9c]">
            <Ic n="termi" />
            <Ic n="caret" cls="w-[10px] h-[10px]" />
            <span className="ml-[7px]">键入命令</span>
          </div>
        </div>
      </div>
      {/* status bar */}
      <div className="h-[28px] shrink-0 flex items-center bg-[#222933] text-[11px] pr-[2px]">
        <div className="ml-[11px] w-[46px] h-[15px] mb-[10px] bg-[#3b4554] flex items-center justify-center font-bold text-[#eef0f3] [clip-path:polygon(6px_100%,calc(100%-6px)_100%,100%_0,0_0)]">模型</div>
        <div className="ml-[2px] w-[50px] h-[15px] mb-[10px] bg-[#2f3743] flex items-center justify-center text-[#a9b1bb] [clip-path:polygon(6px_100%,calc(100%-6px)_100%,100%_0,0_0)]">布局1</div>
        <div className="ml-[2px] w-[22px] h-[15px] mb-[10px] bg-[#2f3743] flex items-center justify-center text-[13px] text-[#bfc5cd] [clip-path:polygon(5px_100%,calc(100%-5px)_100%,100%_0,0_0)]">+</div>
        <div className="ml-auto flex h-[21px] gap-[2px] items-stretch mb-[3px]">
          <div className="w-[30px] bg-[#38414f] flex items-center justify-center text-[#e2e6ea] text-[10.5px] mr-[1px]">模型</div>
          <div className="flex bg-[#38414f]">
            <div className="w-[22px] flex items-center justify-center"><Ic n="grid" cls="w-[14px] h-[14px]" /></div>
            <div className="w-[21px] bg-[#5b90c4] flex items-center justify-center"><Ic n="snap" cls="w-[14px] h-[14px]" /></div>
            <div className="w-[17px] flex items-center justify-center"><Ic n="caret" cls="w-[10px] h-[10px]" /></div>
          </div>
          <div className="flex bg-[#38414f]">
            <div className="w-[20px] flex items-center justify-center"><Ic n="ortho" /></div>
            <div className="w-[21px] flex items-center justify-center"><Ic n="polar" /></div>
            <div className="w-[18px] flex items-center justify-center"><Ic n="caret" cls="w-[10px] h-[10px]" /></div>
            <div className="w-[21px] flex items-center justify-center"><Ic n="osnap" /></div>
            <div className="w-[16px] flex items-center justify-center"><Ic n="caret" cls="w-[10px] h-[10px]" /></div>
          </div>
          <div className="flex bg-[#38414f]">
            <div className="w-[22px] flex items-center justify-center"><Ic n="angle" /></div>
            <div className="w-[20px] bg-[#5b90c4] flex items-center justify-center"><Ic n="lwb" /></div>
            <div className="w-[16px] flex items-center justify-center"><Ic n="caret" cls="w-[10px] h-[10px]" /></div>
          </div>
          <div className="w-[21px] bg-[#38414f] flex items-center justify-center"><Ic n="lw" /></div>
          <div className="flex bg-[#38414f]">
            <div className="w-[21px] bg-[#5b90c4] flex items-center justify-center"><Ic n="annot" /></div>
            <div className="w-[21px] flex items-center justify-center"><Ic n="annot2" /></div>
            <div className="w-[21px] flex items-center justify-center"><Ic n="annot3" /></div>
            <div className="w-[35px] flex items-center justify-center text-[#dfe4ea] text-[10px]">1:1<Ic n="caret" cls="w-[10px] h-[10px]" /></div>
          </div>
          <div className="flex bg-[#38414f]">
            <div className="w-[23px] flex items-center justify-center"><Ic n="gear" cls="w-[14px] h-[14px]" /></div>
            <div className="w-[13px] flex items-center justify-center"><Ic n="caret" cls="w-[10px] h-[10px]" /></div>
          </div>
          <div className="w-[24px] bg-[#38414f] flex items-center justify-center"><Ic n="plus" /></div>
          <div className="w-[21px] bg-[#38414f] flex items-center justify-center"><Ic n="iso" /></div>
          <div className="w-[25px] bg-[#38414f] flex items-center justify-center"><Ic n="clean" /></div>
          <div className="flex bg-[#38414f]">
            <div className="w-[21px] flex items-center justify-center"><Ic n="full" /></div>
            <div className="w-[24px] flex items-center justify-center"><Ic n="burger" /></div>
          </div>
        </div>
      </div>
      {/* watermark overlay */}
      <svg viewBox="0 0 1600 1226" className="absolute -left-[2px] -top-[2px] w-[1600px] h-[1226px] pointer-events-none">
        {marks.map(([x, y]) => (
          <text key={x + "-" + y} x={x} y={y} transform={`rotate(-45 ${x} ${y})`} fontSize="36" fill="#ffffff" fillOpacity=".04" stroke="#ffffff" strokeOpacity=".1" strokeWidth=".8" fontFamily={'"Open Sans","Noto Sans CJK SC",sans-serif'}>知末网 www.znzmo.com</text>
        ))}
        <text x="1406" y="1152" fontSize="62" letterSpacing="1" fill="#ffffff" fillOpacity=".85" stroke="#8a8f96" strokeWidth=".7" fontWeight="300" fontFamily={'"Noto Sans CJK SC",sans-serif'}>知末</text>
        <text x="1362" y="1196" fontSize="29" letterSpacing="1" fill="#ffffff" fillOpacity=".9" stroke="#777c83" strokeWidth=".8" fontFamily={'"Open Sans",sans-serif'}>ID: 1158650363</text>
      </svg>
    </div>
  );
}
